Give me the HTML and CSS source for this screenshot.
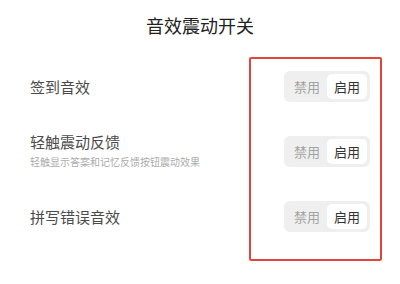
FILE: index.html
```html
<!DOCTYPE html>
<html lang="zh">
<head>
<meta charset="utf-8">
<link rel="stylesheet" href="styles.css">
</head>
<body>
<div class="page">
  <h1 class="title">音效震动开关</h1>
  <div class="list">
    <div class="row">
      <div class="label">签到音效</div>
      <div class="toggle"><span class="seg off">禁用</span><span class="seg on">启用</span></div>
    </div>
    <div class="row">
      <div class="texts">
        <div class="label">轻触震动反馈</div>
        <div class="sub">轻触显示答案和记忆反馈按钮震动效果</div>
      </div>
      <div class="toggle"><span class="seg off">禁用</span><span class="seg on">启用</span></div>
    </div>
    <div class="row">
      <div class="label">拼写错误音效</div>
      <div class="toggle"><span class="seg off">禁用</span><span class="seg on">启用</span></div>
    </div>
  </div>
  <div class="highlight"></div>
</div>
</body>
</html>
```
FILE: styles.css
```css
* { box-sizing: border-box; }
html, body { margin: 0; padding: 0; background: #fff; }
body {
  width: 400px;
  height: 284px;
  overflow: hidden;
  font-family: "Noto Sans CJK SC", "Noto Sans", sans-serif;
}
.page { position: relative; height: 284px; }
.title {
  margin: 0;
  height: 54px;
  padding-top: 14px;
  font-size: 18px;
  line-height: 22px;
  font-weight: 400;
  color: #222;
  text-align: center;
}
.list { display: flex; flex-direction: column; }
.row {
  height: 65px;
  padding: 0 30px;
  display: flex;
  align-items: center;
  justify-content: space-between;
}
.label {
  font-size: 15px;
  line-height: 20px;
  color: #4a4a4a;
}
.texts { display: flex; flex-direction: column; gap: 3px; margin-top: -3px; }
.sub {
  font-size: 10px;
  line-height: 14px;
  color: #ababab;
}
.toggle {
  width: 86px;
  height: 31px;
  padding: 3px;
  background: #efefef;
  border-radius: 6px;
  display: flex;
  align-items: stretch;
}
.seg {
  flex: 1;
  display: flex;
  align-items: center;
  justify-content: center;
  font-size: 13px;
  border-radius: 5px;
}
.seg.off { color: #a3a3a3; }
.seg.on { background: #fff; color: #333; }
.highlight {
  position: absolute;
  left: 249px;
  top: 57px;
  width: 133px;
  height: 204px;
  border: 2px solid #e5443b;
  border-radius: 2px;
}
```
